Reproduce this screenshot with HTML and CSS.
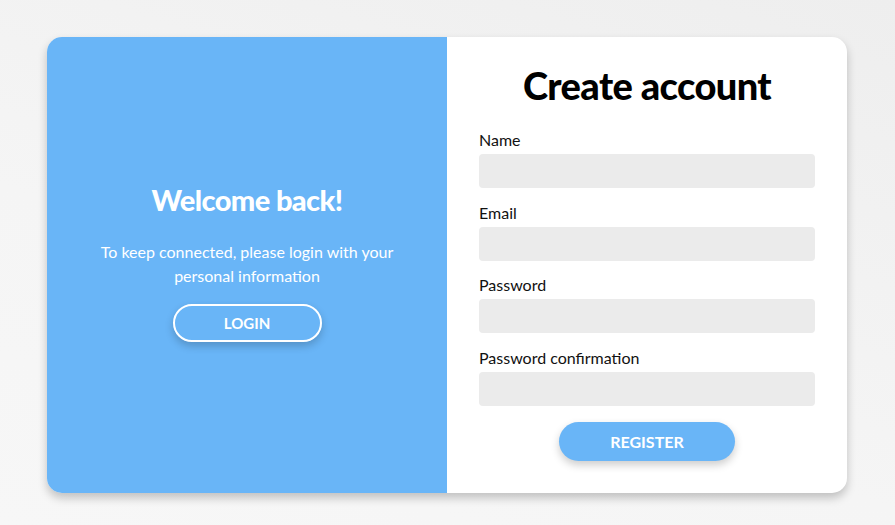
FILE: index.html
```html
<!DOCTYPE html>
<html lang="en">
<head>
<meta charset="utf-8">
<title>Create account</title>
<link rel="stylesheet" href="styles.css">
</head>
<body>
<main class="card">
  <section class="panel-welcome">
    <h2 class="welcome-title">Welcome back!</h2>
    <p class="welcome-text">To keep connected, please login with your personal information</p>
    <button class="btn-ghost" type="button">LOGIN</button>
  </section>
  <section class="panel-form">
    <h1 class="form-title">Create account</h1>
    <form class="form">
      <div class="field">
        <label class="field-label" for="name">Name</label>
        <input class="field-input" id="name" type="text">
      </div>
      <div class="field">
        <label class="field-label" for="email">Email</label>
        <input class="field-input" id="email" type="email">
      </div>
      <div class="field">
        <label class="field-label" for="password">Password</label>
        <input class="field-input" id="password" type="password">
      </div>
      <div class="field">
        <label class="field-label" for="password2">Password confirmation</label>
        <input class="field-input" id="password2" type="password">
      </div>
      <button class="btn-primary" type="button">REGISTER</button>
    </form>
  </section>
</main>
</body>
</html>
```
FILE: styles.css
```css
* { box-sizing: border-box; }
html, body { height: 100%; }
body {
  margin: 0;
  font-family: Lato, "Liberation Sans", sans-serif;
  background: linear-gradient(200deg, #eeeeee 0%, #f5f5f5 60%, #f7f7f7 100%);
  padding: 37px 48px 32px 47px;
}
.card {
  width: 800px;
  height: 456px;
  display: flex;
  border-radius: 15px;
  overflow: hidden;
  background: #ffffff;
  box-shadow: 0 5px 10px rgba(0,0,0,0.22);
}
.panel-welcome {
  width: 400px;
  background: #69b5f7;
  color: #ffffff;
  display: flex;
  flex-direction: column;
  align-items: center;
  justify-content: center;
  text-align: center;
  padding: 0 40px 6px;
}
.welcome-title {
  margin: 0;
  font-size: 29px;
  line-height: 36px;
  font-weight: 900;
  letter-spacing: -0.6px;
}
.welcome-text {
  margin: 22px 0 16px;
  font-size: 16px;
  line-height: 24px;
  font-weight: 400;
}
.btn-ghost {
  width: 149px;
  height: 38px;
  border: 2px solid #ffffff;
  border-radius: 19px;
  background: transparent;
  color: #ffffff;
  font-family: Lato, "Liberation Sans", sans-serif;
  font-size: 15px;
  font-weight: 700;
  box-shadow: 0 4px 8px rgba(0,0,0,0.2);
}
.panel-form {
  width: 400px;
  padding: 25px 32px 0;
  display: flex;
  flex-direction: column;
}
.form-title {
  margin: 0;
  text-align: center;
  font-size: 38px;
  line-height: 46px;
  font-weight: 900;
  color: #000000;
  letter-spacing: -0.6px;
}
.form {
  margin-top: 22px;
  display: flex;
  flex-direction: column;
}
.field {
  display: flex;
  flex-direction: column;
  margin-bottom: 14.67px;
}
.field-label {
  font-size: 16px;
  line-height: 19px;
  color: #111111;
  margin-bottom: 5px;
}
.field-input {
  height: 34px;
  border: none;
  border-radius: 4px;
  background: #ebebeb;
  outline: none;
}
.btn-primary {
  align-self: center;
  margin-top: 1px;
  width: 176px;
  height: 39px;
  border: none;
  border-radius: 20px;
  background: #69b5f7;
  color: #ffffff;
  font-family: Lato, "Liberation Sans", sans-serif;
  font-size: 16px;
  font-weight: 700;
  box-shadow: 0 4px 8px rgba(0,0,0,0.2);
}
```
